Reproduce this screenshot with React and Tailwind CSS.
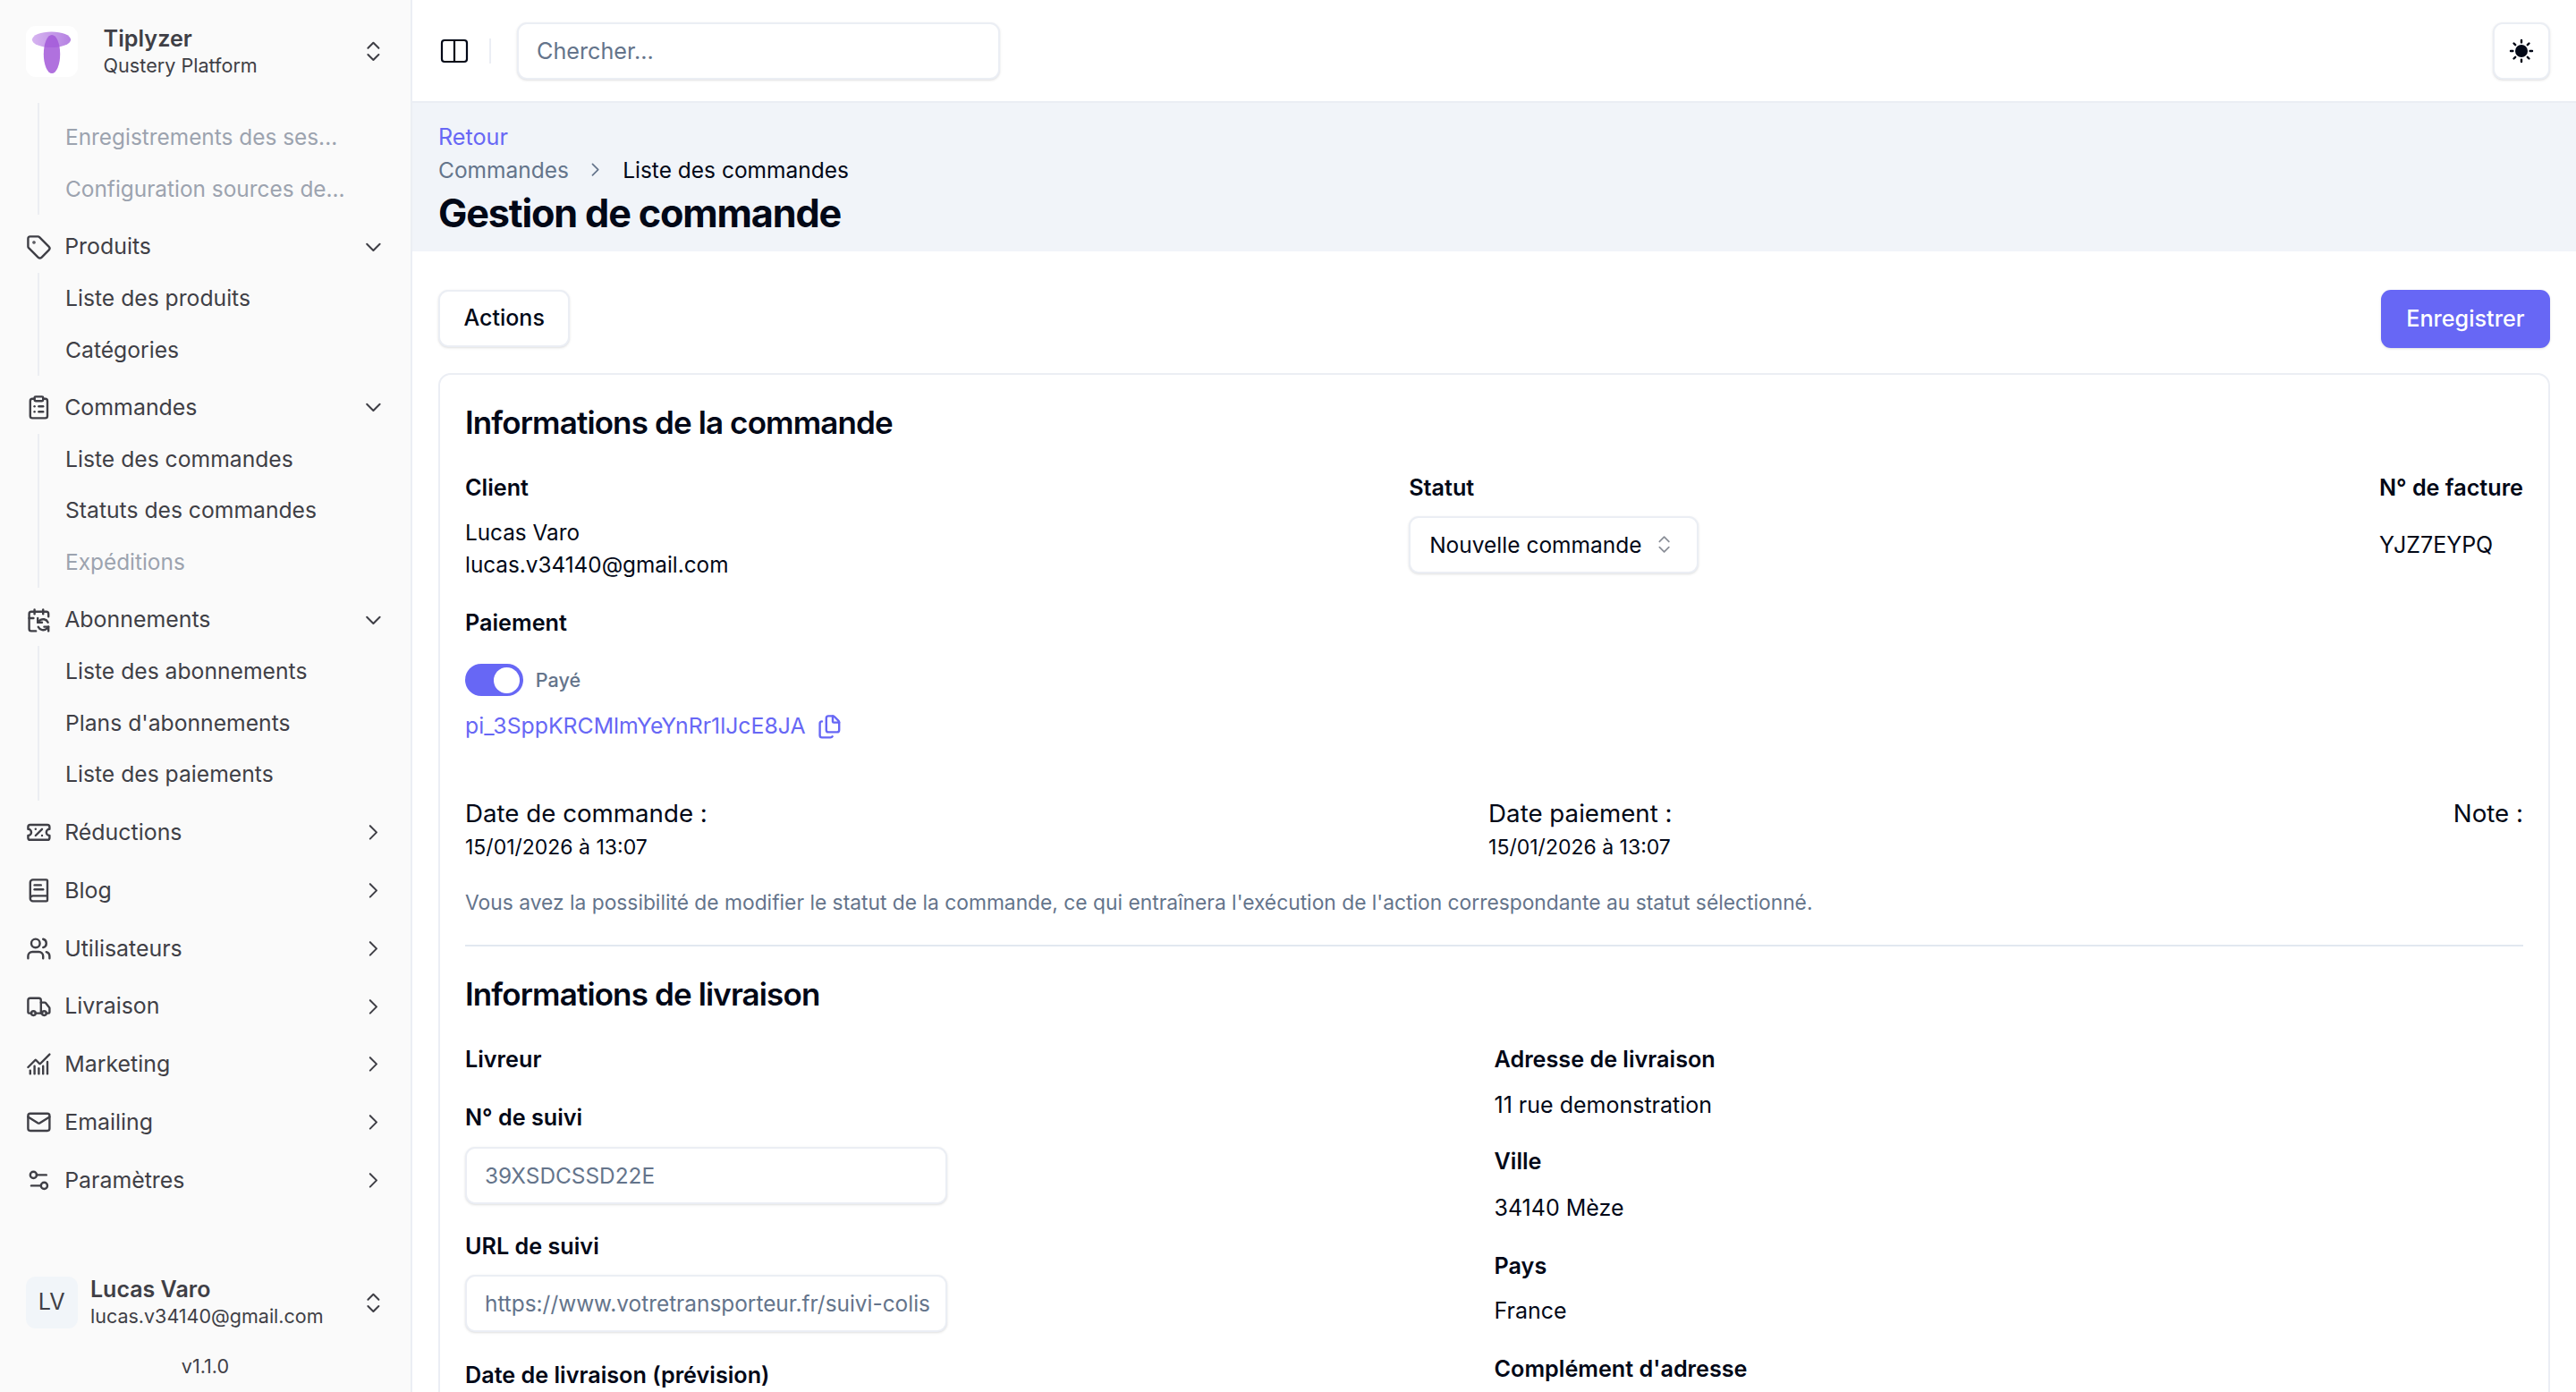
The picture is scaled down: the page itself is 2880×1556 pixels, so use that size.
import {
  Tag,
  ClipboardList,
  CalendarSync,
  TicketPercent,
  BookText,
  Users,
  Truck,
  ChartNoAxesCombined,
  Mail,
  Settings2,
  ChevronsUpDown,
  ChevronDown,
  ChevronRight,
  Files,
} from "lucide-react";

const openGroups = [
  {
    label: "Produits",
    icon: Tag,
    items: [{ label: "Liste des produits" }, { label: "Catégories" }],
  },
  {
    label: "Commandes",
    icon: ClipboardList,
    items: [
      { label: "Liste des commandes" },
      { label: "Statuts des commandes" },
      { label: "Expéditions", off: true },
    ],
  },
  {
    label: "Abonnements",
    icon: CalendarSync,
    items: [
      { label: "Liste des abonnements" },
      { label: "Plans d'abonnements" },
      { label: "Liste des paiements" },
    ],
  },
];

const closedGroups = [
  { label: "Réductions", icon: TicketPercent },
  { label: "Blog", icon: BookText },
  { label: "Utilisateurs", icon: Users },
  { label: "Livraison", icon: Truck },
  { label: "Marketing", icon: ChartNoAxesCombined },
  { label: "Emailing", icon: Mail },
  { label: "Paramètres", icon: Settings2 },
];

function SubList({ items, className = "" }) {
  return (
    <div className={"ml-[13px] border-l-2 border-[#eceef2] pl-[29px] " + className}>
      {items.map((item) => (
        <div
          key={item.label}
          className={
            "h-[57.6px] flex items-center whitespace-nowrap " +
            (item.off ? "text-[24.4px] text-[#9ca3af]" : "text-[24.7px] text-[#3f3f46]")
          }
        >
          {item.label}
        </div>
      ))}
    </div>
  );
}

function NavRow({ label, icon: Icon, open }) {
  const Chevron = open ? ChevronDown : ChevronRight;
  return (
    <div className="h-[57.6px] flex items-center text-[#3f3f46]">
      <Icon size={28.8} className="shrink-0" />
      <span className="ml-[14.4px] flex-1 text-[24.9px]">{label}</span>
      <Chevron size={28.8} className="shrink-0" strokeWidth={1.7} />
    </div>
  );
}

function Sidebar() {
  return (
    <aside className="w-[461px] h-full shrink-0 flex flex-col bg-[#fafafa] border-r-2 border-[#ebeef4]">
      <div className="h-[115px] shrink-0 flex items-center pl-[29px] pr-[27px]">
        <div className="w-[57.6px] h-[57.6px] rounded-[11px] bg-white flex items-center justify-center">
          <svg width="57" height="57" viewBox="0 0 57 57">
            <defs>
              <linearGradient id="logoTop" x1="0" y1="0" x2="1" y2="0">
                <stop offset="0" stopColor="#d6b4f0" />
                <stop offset="1" stopColor="#b581e2" />
              </linearGradient>
            </defs>
            <ellipse cx="28.5" cy="15.3" rx="21.6" ry="8.8" fill="url(#logoTop)" />
            <ellipse cx="29" cy="31.5" rx="9.2" ry="21.6" fill="#a258d8" fillOpacity="0.85" />
          </svg>
        </div>
        <div className="ml-[29px] -mt-[1px] flex-1 flex flex-col">
          <span className="text-[25.2px] leading-[32px] font-semibold text-[#3f3f46]">Tiplyzer</span>
          <span className="text-[21.6px] leading-[28px] text-[#3f3f46]">Qustery Platform</span>
        </div>
        <ChevronsUpDown size={28.8} className="text-[#3f3f46]" strokeWidth={1.7} />
      </div>

      <nav className="flex-1 overflow-hidden pl-[29px] pr-[27px]">
        <SubList
          className="pt-[10px]"
          items={[
            { label: "Enregistrements des ses...", off: true },
            { label: "Configuration sources de...", off: true },
          ]}
        />
        {openGroups.map((g) => (
          <div key={g.label} className="mt-[7px]">
            <NavRow label={g.label} icon={g.icon} open />
            <SubList items={g.items} />
          </div>
        ))}
        {closedGroups.map((g) => (
          <div key={g.label} className="mt-[7.2px]">
            <NavRow label={g.label} icon={g.icon} />
          </div>
        ))}
      </nav>

      <div className="h-[130px] shrink-0 flex flex-col pl-[29px] pr-[27px]">
        <div className="flex items-center">
          <div className="w-[57.6px] h-[57.6px] rounded-[11px] bg-[#f1f5f9] flex items-center justify-center text-[25.2px] text-[#3f3f46]">
            LV
          </div>
          <div className="ml-[14.4px] flex-1 flex flex-col">
            <span className="text-[25px] leading-[30px] font-semibold text-[#3f3f46]">Lucas Varo</span>
            <span className="text-[21.5px] leading-[30px] text-[#3f3f46]">lucas.v34140@gmail.com</span>
          </div>
          <ChevronsUpDown size={28.8} className="text-[#3f3f46]" strokeWidth={1.7} />
        </div>
        <div className="mt-[25px] pr-[2px] text-center text-[21.6px] leading-[32px] text-[#3f3f46]">v1.1.0</div>
      </div>
    </aside>
  );
}

function Label({ children, className = "" }) {
  return <div className={"text-[25.2px] leading-[36px] font-semibold text-[#020817] " + className}>{children}</div>;
}

function Value({ children, className = "" }) {
  return <div className={"text-[25px] leading-[36px] text-[#020817] " + className}>{children}</div>;
}

function TextField({ value }) {
  return (
    <input
      readOnly
      value={value}
      className="block w-[539px] h-[64px] pl-[20px] pr-[14px] rounded-[11px] border-2 border-[#ebeef4] bg-white shadow-sm text-[24.4px] text-[#64748b] outline-none"
    />
  );
}

function Topbar() {
  return (
    <header className="h-[115px] shrink-0 flex items-center justify-between pl-[29px] pr-[29px] border-b-2 border-[#ebeef4] bg-white">
      <div className="flex items-center">
        <svg width="32" height="28" viewBox="0 0 32 28" fill="none" stroke="#020817" strokeWidth="2.2" className="ml-[1.5px]">
          <rect x="2" y="2" width="28" height="24" rx="3" />
          <path d="M16 2v24" />
        </svg>
        <div className="ml-[23.5px] w-[2px] h-[28px] bg-[#ebeef4]" />
        <input
          readOnly
          placeholder="Chercher..."
          className="ml-[29px] w-[540px] h-[64px] px-[20px] rounded-[11px] border-2 border-[#ebeef4] bg-white shadow-sm text-[25.2px] placeholder:text-[#64748b] outline-none"
        />
      </div>
      <button className="w-[64px] h-[64px] rounded-[11px] border-2 border-[#ebeef4] bg-white shadow-sm flex items-center justify-center">
        <svg width="28" height="28" viewBox="0 0 28 28" fill="none" stroke="#020817" strokeWidth="2.4" strokeLinecap="round">
          <circle cx="14" cy="14" r="7" fill="#020817" stroke="none" />
          <path d="M14 2v2.4M14 23.6V26M2 14h2.4M23.6 14H26M5.5 5.5l1.7 1.7M20.8 20.8l1.7 1.7M5.5 22.5l1.7-1.7M20.8 7.2l1.7-1.7" />
        </svg>
      </button>
    </header>
  );
}

function PageHead() {
  return (
    <section className="h-[166px] shrink-0 bg-[#f1f4f9] pl-[29px] pt-[20px]">
      <div className="text-[25.2px] leading-[36px] text-[#6767f5]">Retour</div>
      <div className="flex items-center text-[24.5px] leading-[38px]">
        <span className="text-[#64748b]">Commandes</span>
        <ChevronRight size={25.2} className="mx-[17.5px] text-[#64748b]" strokeWidth={1.6} />
        <span className="text-[#020817]">Liste des commandes</span>
      </div>
      <h1 className="text-[43.2px] leading-[58px] font-bold tracking-[-0.027em] text-[#020817]">Gestion de commande</h1>
    </section>
  );
}

function OrderInfo() {
  return (
    <>
      <h2 className="h-[50px] flex items-center text-[35px] font-semibold tracking-[-0.025em] text-[#020817]">
        Informations de la commande
      </h2>
      <div className="mt-[30px] flex justify-between">
        <div>
          <Label>Client</Label>
          <div className="mt-[14px] text-[24.3px] leading-[36px] text-[#020817]">Lucas Varo</div>
          <div className="text-[24.3px] leading-[36px] text-[#020817]">lucas.v34140@gmail.com</div>
        </div>
        <div className="w-[324px]">
          <Label>Statut</Label>
          <button className="mt-[14px] w-[324px] h-[64px] pl-[21px] pr-[22px] rounded-[11px] border-2 border-[#ebeef4] bg-white shadow-sm flex items-center justify-between text-[24.5px] text-[#020817]">
            Nouvelle commande
            <ChevronsUpDown size={25.2} className="text-[#8b8f98] mr-[2px]" strokeWidth={1.7} />
          </button>
        </div>
        <div>
          <Label>N° de facture</Label>
          <Value className="mt-[28px]">YJZ7EYPQ</Value>
        </div>
      </div>

      <Label className="mt-[29px]">Paiement</Label>
      <div className="mt-[28px] flex items-center">
        <div className="w-[64.8px] h-[36px] rounded-full bg-[#6767f5] flex items-center justify-end pr-[3.6px]">
          <div className="w-[29px] h-[29px] rounded-full bg-white" />
        </div>
        <span className="ml-[14px] text-[21.6px] font-medium text-[#64748b]">Payé</span>
      </div>
      <div className="mt-[16px] h-[36px] flex items-center text-[24.8px] text-[#6767f5]">
        pi_3SppKRCMlmYeYnRr1lJcE8JA
        <Files size={28.8} className="ml-[12px]" />
      </div>

      <div className="mt-[59px] flex justify-between">
        <div>
          <div className="text-[27.7px] leading-[40px] text-[#020817]">Date de commande :</div>
          <div className="mt-[2px] text-[23px] leading-[32px] text-[#020817]">15/01/2026 à 13:07</div>
        </div>
        <div>
          <div className="text-[27.7px] leading-[40px] text-[#020817]">Date paiement :</div>
          <div className="mt-[2px] text-[23px] leading-[32px] text-[#020817]">15/01/2026 à 13:07</div>
        </div>
        <div className="text-[27.7px] leading-[40px] text-[#020817]">Note :</div>
      </div>
      <p className="mt-[30px] text-[22.8px] leading-[32px] text-[#64748b]">
        Vous avez la possibilité de modifier le statut de la commande, ce qui entraînera l'exécution de l'action
        correspondante au statut sélectionné.
      </p>
      <div className="mt-[31px] h-[2px] bg-[#e2e8f0]" />
    </>
  );
}

function DeliveryInfo() {
  return (
    <>
      <h2 className="mt-[28.5px] h-[50px] flex items-center text-[35px] font-semibold tracking-[-0.025em] text-[#020817]">
        Informations de livraison
      </h2>
      <div className="mt-[29px] grid grid-cols-2">
        <div>
          <Label>Livreur</Label>
          <Label className="mt-[29px]">N° de suivi</Label>
          <div className="mt-[15px]">
            <TextField value="39XSDCSSD22E" />
          </div>
          <Label className="mt-[29px]">URL de suivi</Label>
          <div className="mt-[14px]">
            <TextField value="https://www.votretransporteur.fr/suivi-colis" />
          </div>
          <Label className="mt-[30px]">Date de livraison (prévision)</Label>
        </div>
        <div>
          <Label>Adresse de livraison</Label>
          <Value className="mt-[15px]">11 rue demonstration</Value>
          <Label className="mt-[27px]">Ville</Label>
          <Value className="mt-[16px]">34140 Mèze</Value>
          <Label className="mt-[29px]">Pays</Label>
          <Value className="mt-[14px]">France</Value>
          <Label className="mt-[29px]">Complément d'adresse</Label>
        </div>
      </div>
    </>
  );
}

export default function App() {
  return (
    <div className="flex h-screen overflow-hidden bg-white font-['Inter',sans-serif]">
      <Sidebar />
      <main className="flex-1 min-w-0 flex flex-col overflow-hidden">
        <Topbar />
        <PageHead />
        <div className="pt-[43px] pl-[29px] pr-[29px]">
          <div className="flex justify-between">
            <button className="h-[64px] px-[26.5px] rounded-[11px] border-2 border-[#ebeef4] bg-white shadow-sm text-[25px] font-medium text-[#020817]">
              Actions
            </button>
            <button className="h-[65px] px-[28.5px] rounded-[11px] bg-[#6767f5] shadow-sm text-[25.2px] font-medium text-white">
              Enregistrer
            </button>
          </div>
          <div className="mt-[28px] rounded-[14px] border-2 border-[#ebeef4] bg-white pt-[28px] pl-[28px] pr-[28px] pb-[40px]">
            <OrderInfo />
            <DeliveryInfo />
          </div>
        </div>
      </main>
    </div>
  );
}
